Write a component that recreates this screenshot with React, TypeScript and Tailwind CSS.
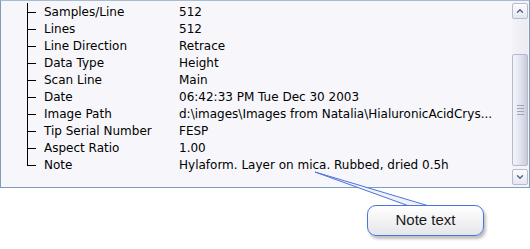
import { ChevronUp, ChevronDown } from "lucide-react";

const rows: [string, string][] = [
  ["Samples/Line", "512"],
  ["Lines", "512"],
  ["Line Direction", "Retrace"],
  ["Data Type", "Height"],
  ["Scan Line", "Main"],
  ["Date", "06:42:33 PM Tue Dec 30 2003"],
  ["Image Path", "d:\\images\\Images from Natalia\\HialuronicAcidCrys..."],
  ["Tip Serial Number", "FESP"],
  ["Aspect Ratio", "1.00"],
  ["Note", "Hylaform. Layer on mica. Rubbed, dried 0.5h"],
];

function ScrollBar() {
  return (
    <div className="w-[17px] flex flex-col bg-[#f3f3f8] py-[2px] pr-[1px]">
      <div className="h-[16px] rounded-[2px] border border-[#b4bbcf] bg-gradient-to-b from-[#fdfdff] to-[#e4e6f0] flex items-center justify-center">
        <ChevronUp size={10} strokeWidth={3.2} color="#4d6185" />
      </div>
      <div className="h-[35px] bg-gradient-to-r from-[#f3f3f8] to-[#ebebf2]" />
      <div className="flex-1 rounded-[2px] border border-[#b4b9cc] bg-gradient-to-r from-[#f4f5fa] via-[#e3e4ef] to-[#c9cbdb] flex flex-col items-center justify-center gap-[2px]">
        <div className="w-[7px] h-px bg-[#9ea3b7]" />
        <div className="w-[7px] h-px bg-[#9ea3b7]" />
        <div className="w-[7px] h-px bg-[#9ea3b7]" />
        <div className="w-[7px] h-px bg-[#9ea3b7]" />
      </div>
      <div className="h-[3px]" />
      <div className="h-[16px] rounded-[2px] border border-[#b4bbcf] bg-gradient-to-b from-[#fdfdff] to-[#e4e6f0] flex items-center justify-center">
        <ChevronDown size={10} strokeWidth={3.2} color="#4d6185" />
      </div>
    </div>
  );
}

export default function App() {
  return (
    <div className="relative w-[530px] h-[249px] bg-white overflow-hidden">
      <div className="h-[188px] border border-t-[#a9bbd0] border-[#7f9db9] bg-[#f7f7fb] flex">
        <div
          className="flex-1 relative pt-[2px] text-[12px] text-black"
          style={{ fontFamily: '"DejaVu Sans", Verdana, sans-serif' }}
        >
          {rows.map(([label, value], i) => (
            <div key={label} className="flex h-[17.1px] items-center">
              <div className="w-[26px]" />
              <div className="relative w-[17px] self-stretch">
                <div
                  className={
                    i === rows.length - 1
                      ? "absolute left-0 top-0 h-1/2 w-px bg-black"
                      : "absolute left-0 top-0 bottom-0 w-px bg-black"
                  }
                />
                <div className="absolute left-0 top-1/2 w-[9px] h-px bg-black" />
              </div>
              <div className="w-[135px] whitespace-nowrap">{label}</div>
              <div className="whitespace-nowrap">{value}</div>
            </div>
          ))}
        </div>
        <ScrollBar />
      </div>

      <svg
        className="absolute left-0 top-0 pointer-events-none"
        width="530"
        height="249"
      >
        <polygon
          points="315,172 409,206 429,206"
          fill="#f2f2f6"
          stroke="#4a72e0"
          strokeWidth="1"
        />
      </svg>

      <div
        className="absolute left-[367px] top-[205px] w-[117px] h-[31px] rounded-[9px] border border-[#4a72e0] bg-gradient-to-b from-white to-[#e6e6ea] shadow-[2px_3px_3px_rgba(0,0,0,0.25)] flex items-center justify-center text-[15px] text-[#1a1a1a]"
        style={{ fontFamily: '"Liberation Sans", Arial, sans-serif' }}
      >
        Note text
      </div>
    </div>
  );
}
